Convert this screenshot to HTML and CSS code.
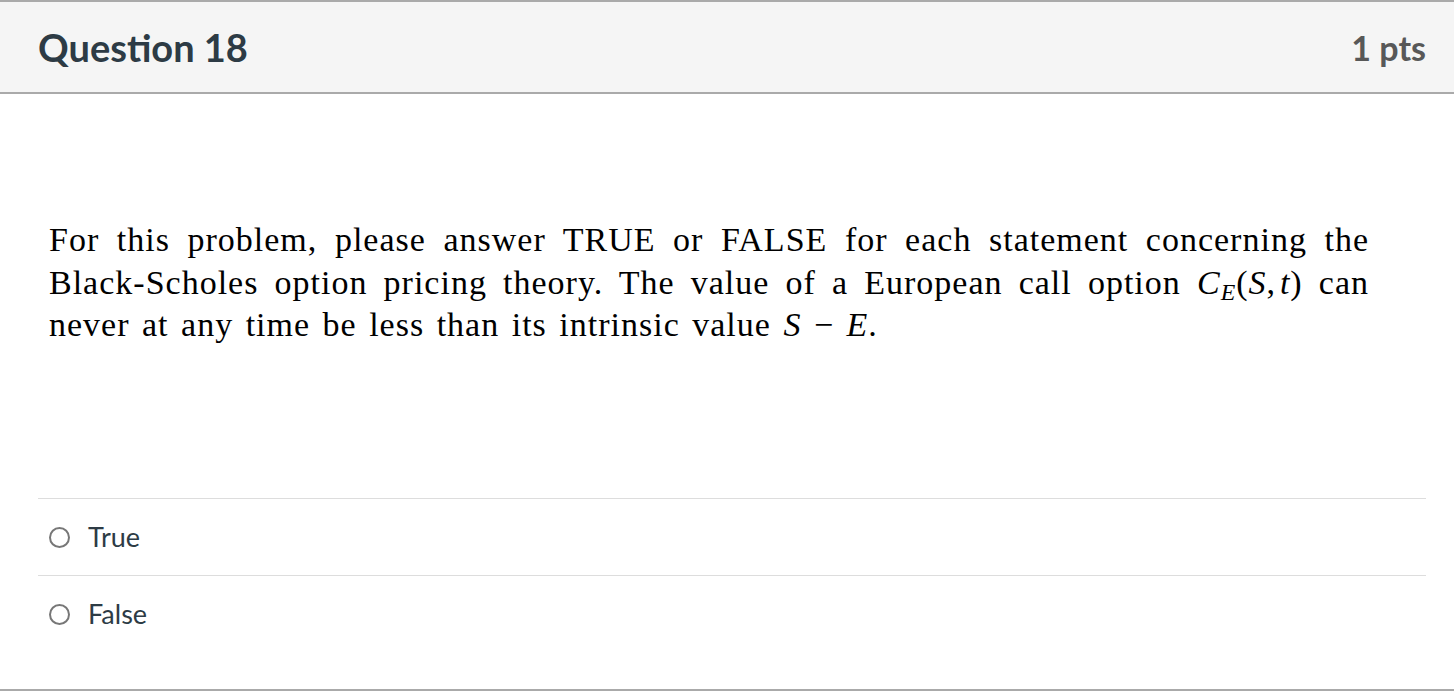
FILE: index.html
```html
<!DOCTYPE html>
<html>
<head>
<meta charset="utf-8">
<link rel="stylesheet" href="styles.css">
</head>
<body>
<div class="question">
  <div class="header">
    <div class="title">Question 18</div>
    <div class="pts">1 pts</div>
  </div>
  <div class="content">
    <div class="text">
      <span class="line">For this problem, please answer TRUE or FALSE for each statement concerning the</span>
      <span class="line">Black-Scholes option pricing theory. The value of a European call option <i class="m">C<sub>E</sub></i>(<i class="m">S</i>,&#8202;<i class="m">t</i>) can</span>
      <span class="line last">never at any time be less than its intrinsic value <i class="m">S</i> &minus; <i class="m">E</i>.</span>
    </div>
    <div class="answers">
      <div class="answer"><span class="radio"></span><span class="label">True</span></div>
      <div class="answer"><span class="radio"></span><span class="label">False</span></div>
    </div>
  </div>
</div>
</body>
</html>
```
FILE: styles.css
```css
html, body {
  margin: 0;
  padding: 0;
  background: #fff;
}
.question {
  border-top: 2px solid #aaaaaa;
  border-bottom: 2px solid #aaaaaa;
  height: 691px;
  box-sizing: border-box;
}
.header {
  background: #f5f5f5;
  height: 90px;
  border-bottom: 2px solid #aaaaaa;
  display: flex;
  justify-content: space-between;
  align-items: center;
  padding: 0 28px 0 38px;
  font-family: Lato, "Noto Sans", sans-serif;
  font-weight: 700;
}
.title {
  font-size: 38px;
  color: #2d3b45;
}
.pts {
  font-size: 34px;
  color: #585858;
}
.content {
  padding: 0 28px 0 38px;
}
.text {
  padding: 125px 57px 0 11px;
  font-family: "Liberation Serif", "Times New Roman", serif;
  font-size: 34px;
  line-height: 42.5px;
  letter-spacing: 1px;
  word-spacing: 3px;
  color: #000;
  height: 279px;
  box-sizing: content-box;
}
.line {
  display: block;
  text-align: justify;
  text-align-last: justify;
}
.line.last {
  text-align-last: left;
}
.m {
  font-style: italic;
}
.m sub {
  font-size: 0.7em;
  vertical-align: -0.25em;
  line-height: 0;
}
.answer {
  border-top: 1px solid #dddddd;
  height: 76px;
  display: flex;
  align-items: center;
  font-family: Lato, "Noto Sans", sans-serif;
  font-size: 27px;
  color: #2d3b45;
}
.radio {
  width: 17px;
  height: 17px;
  border: 2px solid #777;
  border-radius: 50%;
  margin-left: 11px;
  margin-right: 18px;
  flex: none;
}
.label {
  position: relative;
  top: -1px;
}
```
